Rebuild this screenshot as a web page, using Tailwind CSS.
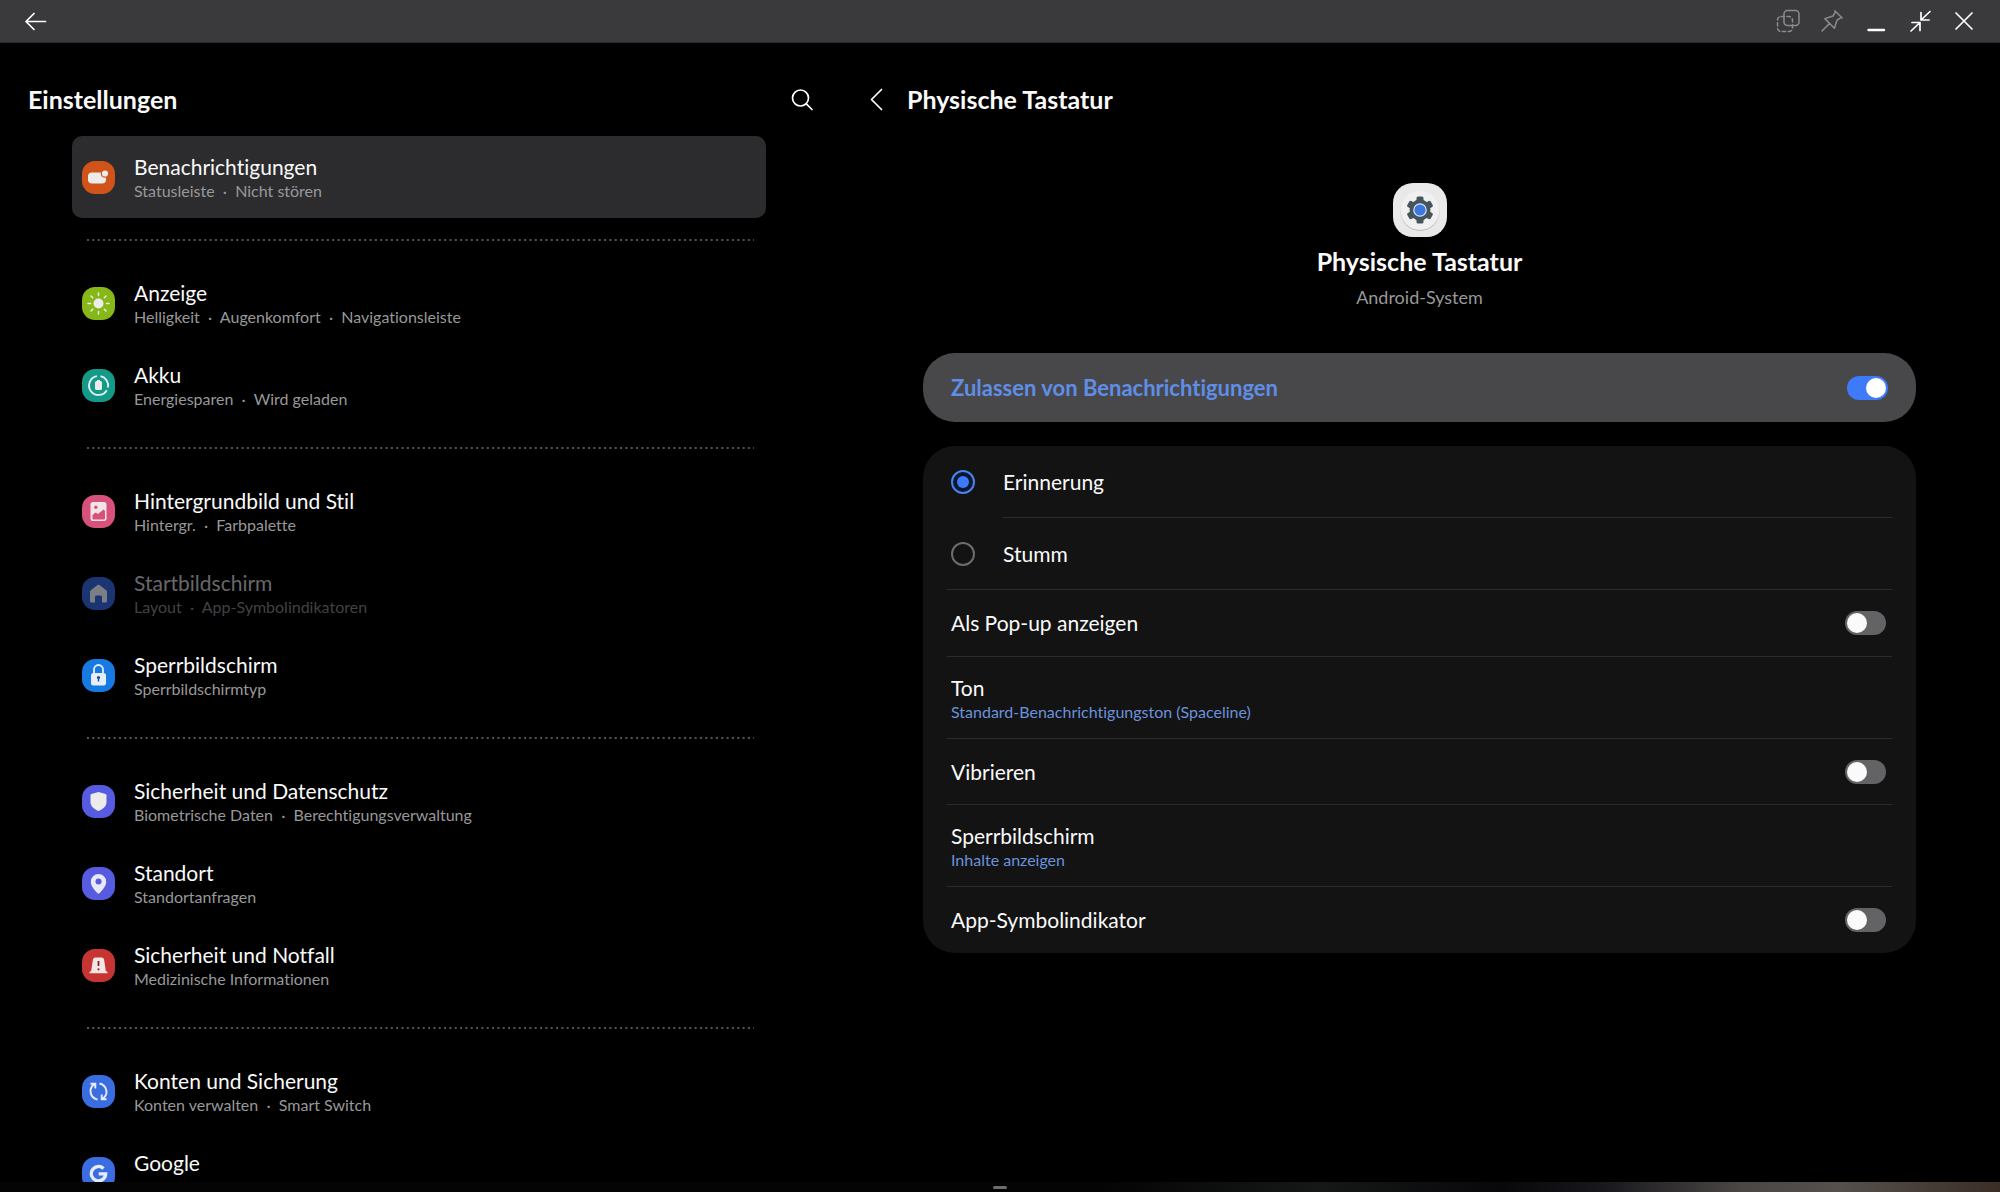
<!DOCTYPE html>
<html lang="de">

<head>
    <meta charset="UTF-8">
    <meta name="viewport" content="width=device-width, initial-scale=1.0">
    <title>Einstellungen</title>
    <!-- Include Tailwind CSS -->
    <script src="https://cdn.jsdelivr.net/npm/@tailwindcss/browser@4"></script>
</head>

<body class="bg-black text-[#fafafa] font-['Lato','Noto_Sans',sans-serif] [font-variant-ligatures:none] h-screen flex flex-col overflow-hidden">

    <!-- Window title bar -->
    <div class="h-[43px] shrink-0 bg-[#3a3a3c] border-b border-[#2a2a2c] flex items-center justify-between pl-6 pr-6">
        <button aria-label="Zurück">
            <svg class="w-6 h-6" viewBox="0 0 24 24" fill="none" stroke="#fff" stroke-width="1.7" stroke-linecap="round" stroke-linejoin="round"><path d="M21.5 12.5H2M10 4.5L2 12.500l8 8" /></svg>
        </button>
        <div class="flex items-center gap-5">
            <button aria-label="Deckkraft">
                <svg class="w-6 h-6" viewBox="0 0 24 24" fill="none" stroke="#8b8b8d" stroke-width="1.5" stroke-linecap="round"><rect x="8" y="1.5" width="15" height="15" rx="3.5" /><rect x="1.5" y="7.5" width="15" height="15" rx="3.5" stroke-dasharray="3.4 2.6" /></svg>
            </button>
            <button aria-label="Anheften">
                <svg class="w-6 h-6" viewBox="0 0 24 24" fill="none" stroke="#8b8b8d" stroke-width="1.5" stroke-linecap="round" stroke-linejoin="round"><path d="M14.8 1.8l7.4 7.2M15.6 2.6L13 7l-8.200 2.600l9.600 9.600L17 11.200L21.400 8.400M9.600 14.400L2 22" /></svg>
            </button>
            <button aria-label="Minimieren">
                <svg class="w-6 h-6" viewBox="0 0 24 24" fill="none" stroke="#fff" stroke-width="2.400" stroke-linecap="round"><path d="M4.500 21h15.500" /></svg>
            </button>
            <button aria-label="Verkleinern">
                <svg class="w-6 h-6" viewBox="0 0 24 24" fill="none" stroke="#fff" stroke-width="1.700" stroke-linecap="round" stroke-linejoin="round"><path d="M22 2.500l-9 8.500M13 3.500V11h8M3 22l9-8.500M12 21.500V13.500H4" /></svg>
            </button>
            <button aria-label="Schließen">
                <svg class="w-6 h-6" viewBox="0 0 24 24" fill="none" stroke="#fff" stroke-width="1.700" stroke-linecap="round"><path d="M4 4l16 16M20 4L4 20" /></svg>
            </button>
        </div>
    </div>

    <div class="flex flex-1 min-h-0">

        <!-- Settings list -->
        <section class="w-[42%] flex flex-col min-h-0">
            <div class="mt-8 mb-[11px] h-[50px] shrink-0 flex items-center justify-between pl-7 pr-[26px]">
                <h1 class="text-[25px] font-bold">Einstellungen</h1>
                <button aria-label="Suchen">
                    <svg class="w-6 h-6" viewBox="0 0 24 24" fill="none" stroke="#fff" stroke-width="1.700" stroke-linecap="round"><circle cx="10.500" cy="10" r="8" /><path d="M16.300 15.800L22 21.500" /></svg>
                </button>
            </div>

            <nav class="flex-1 min-h-0 overflow-hidden pl-[72px] pr-[74px]">
                <a href="#" class="h-[82px] flex items-center gap-[19px] pl-[10px] rounded-[10px] bg-[#2c2c2e]">
                    <svg class="w-[33px] h-[33px]" viewBox="0 0 33 33"><rect width="33" height="33" rx="13" fill="#d0541a" /><rect x="6" y="11.500" width="18" height="11" rx="4" fill="#ececec" /><circle cx="23" cy="12.500" r="4.300" fill="#d0541a" /><circle cx="23" cy="12.500" r="3.100" fill="#ececec" /></svg>
                    <span class="pt-1">
                        <span class="block text-[21px] leading-6">Benachrichtigungen</span>
                        <span class="block text-base leading-6 text-[#98989a] whitespace-pre">Statusleiste  ·  Nicht stören</span>
                    </span>
                </a>

                <svg class="w-full h-[44px] px-[15px] pr-3"><line x1="0" y1="22" x2="100%" y2="22" stroke="#555" stroke-width="2" stroke-dasharray="2 3.330" /></svg>

                <a href="#" class="h-[82px] flex items-center gap-[19px] pl-[10px]">
                    <svg class="w-[33px] h-[33px]" viewBox="0 0 33 33"><rect width="33" height="33" rx="13" fill="#86b817" /><circle cx="16.500" cy="16.500" r="5" fill="#ececec" /><path d="M16.500 6v2.500M16.500 24.500V27M6 16.500h2.500M24.500 16.500H27M9 9l1.700 1.700M22.300 22.300L24 24M24 9l-1.700 1.700M10.700 22.300L9 24" stroke="#ececec" stroke-width="1.500" stroke-linecap="round" /></svg>
                    <span class="pt-1">
                        <span class="block text-[21px] leading-6">Anzeige</span>
                        <span class="block text-base leading-6 text-[#98989a] whitespace-pre">Helligkeit  ·  Augenkomfort  ·  Navigationsleiste</span>
                    </span>
                </a>
                <a href="#" class="h-[82px] flex items-center gap-[19px] pl-[10px]">
                    <svg class="w-[33px] h-[33px]" viewBox="0 0 33 33"><rect width="33" height="33" rx="13" fill="#159a89" /><path d="M18.500 7.200A9.500 9.500 0 0 1 25.900 18.500M24.800 21.200A9.500 9.500 0 1 1 15 7.100" fill="none" stroke="#e4f5f2" stroke-width="1.800" /><path d="M15 11h3v1h.5a1.500 1.500 0 0 1 1.500 1.500v6a1.500 1.500 0 0 1-1.500 1.500h-4a1.500 1.500 0 0 1-1.500-1.500v-6a1.500 1.500 0 0 1 1.500-1.500h.5z" fill="#ececec" /></svg>
                    <span class="pt-1">
                        <span class="block text-[21px] leading-6">Akku</span>
                        <span class="block text-base leading-6 text-[#98989a] whitespace-pre">Energiesparen  ·  Wird geladen</span>
                    </span>
                </a>

                <svg class="w-full h-[44px] px-[15px] pr-3"><line x1="0" y1="22" x2="100%" y2="22" stroke="#555" stroke-width="2" stroke-dasharray="2 3.330" /></svg>

                <a href="#" class="h-[82px] flex items-center gap-[19px] pl-[10px]">
                    <svg class="w-[33px] h-[33px]" viewBox="0 0 33 33"><rect width="33" height="33" rx="13" fill="#d6527a" /><rect x="8.500" y="7" width="16" height="19" rx="2.500" fill="#f3e4ea" /><circle cx="13.800" cy="12.300" r="1.700" fill="#d6527a" /><path d="M10.500 20l3-2.500 2.500 1.500 5.500-4.500 1.500 1.500v7.500a1 1 0 0 1-1 1h-10.500a1 1 0 0 1-1-1z" fill="#d6527a" /></svg>
                    <span class="pt-1">
                        <span class="block text-[21px] leading-6">Hintergrundbild und Stil</span>
                        <span class="block text-base leading-6 text-[#98989a] whitespace-pre">Hintergr.  ·  Farbpalette</span>
                    </span>
                </a>
                <a href="#" aria-disabled="true" class="h-[82px] flex items-center gap-[19px] pl-[10px]">
                    <svg class="w-[33px] h-[33px]" viewBox="0 0 33 33"><rect width="33" height="33" rx="13" fill="#1b3572" /><path d="M15.500 8a1.700 1.700 0 0 1 2 0l7 5.500q.5.500.5 1.200V24a1.500 1.500 0 0 1-1.500 1.500H20V20a1.500 1.500 0 0 0-1.500-1.500h-4A1.500 1.500 0 0 0 13 20v5.500H9.500A1.500 1.500 0 0 1 8 24v-9.300q0-.7.500-1.200z" fill="#7c7e86" /></svg>
                    <span class="pt-1">
                        <span class="block text-[21px] leading-6 text-[#68686a]">Startbildschirm</span>
                        <span class="block text-base leading-6 text-[#424244] whitespace-pre">Layout  ·  App-Symbolindikatoren</span>
                    </span>
                </a>
                <a href="#" class="h-[82px] flex items-center gap-[19px] pl-[10px]">
                    <svg class="w-[33px] h-[33px]" viewBox="0 0 33 33"><rect width="33" height="33" rx="13" fill="#1779e2" /><path d="M12 15v-4.500a4.500 4.500 0 0 1 9 0V15" fill="none" stroke="#e6eef8" stroke-width="1.800" /><rect x="9" y="14" width="15" height="12.500" rx="2.500" fill="#e6eef8" /><circle cx="16.500" cy="18.500" r="1.600" fill="#1a4fa0" /><path d="M16.500 18.500v4" stroke="#1a4fa0" stroke-width="1.400" /></svg>
                    <span class="pt-1">
                        <span class="block text-[21px] leading-6">Sperrbildschirm</span>
                        <span class="block text-base leading-6 text-[#98989a] whitespace-pre">Sperrbildschirmtyp</span>
                    </span>
                </a>

                <svg class="w-full h-[44px] px-[15px] pr-3"><line x1="0" y1="22" x2="100%" y2="22" stroke="#555" stroke-width="2" stroke-dasharray="2 3.330" /></svg>

                <a href="#" class="h-[82px] flex items-center gap-[19px] pl-[10px]">
                    <svg class="w-[33px] h-[33px]" viewBox="0 0 33 33"><rect width="33" height="33" rx="13" fill="#565be0" /><path d="M16.500 7l7 2q1 .4 1 1.500v6.500c0 4-3 7-8 9-5-2-8-5-8-9v-6.500q0-1.100 1-1.500z" fill="#ececec" /></svg>
                    <span class="pt-1">
                        <span class="block text-[21px] leading-6">Sicherheit und Datenschutz</span>
                        <span class="block text-base leading-6 text-[#98989a] whitespace-pre">Biometrische Daten  ·  Berechtigungsverwaltung</span>
                    </span>
                </a>
                <a href="#" class="h-[82px] flex items-center gap-[19px] pl-[10px]">
                    <svg class="w-[33px] h-[33px]" viewBox="0 0 33 33"><rect width="33" height="33" rx="13" fill="#565be0" /><path d="M16.500 7a7.700 7.700 0 0 1 7.700 7.700c0 4.500-4 8.500-6.500 11.300a1.600 1.600 0 0 1-2.400 0c-2.500-2.800-6.500-6.800-6.500-11.300A7.700 7.700 0 0 1 16.500 7z" fill="#e8e9fa" /><circle cx="16.500" cy="14.500" r="3" fill="#565be0" /></svg>
                    <span class="pt-1">
                        <span class="block text-[21px] leading-6">Standort</span>
                        <span class="block text-base leading-6 text-[#98989a] whitespace-pre">Standortanfragen</span>
                    </span>
                </a>
                <a href="#" class="h-[82px] flex items-center gap-[19px] pl-[10px]">
                    <svg class="w-[33px] h-[33px]" viewBox="0 0 33 33"><rect width="33" height="33" rx="13" fill="#c73532" /><path d="M13.500 8.500h6q2.200 0 2.600 2.200L23.800 22l1.700 1v1.200h-18V23l1.700-1 1.700-11.300q.4-2.200 2.600-2.200z" fill="#f3e6e6" /><path d="M16.500 12v5" stroke="#8a2020" stroke-width="1.800" /><circle cx="16.500" cy="20.300" r="1.100" fill="#8a2020" /></svg>
                    <span class="pt-1">
                        <span class="block text-[21px] leading-6">Sicherheit und Notfall</span>
                        <span class="block text-base leading-6 text-[#98989a] whitespace-pre">Medizinische Informationen</span>
                    </span>
                </a>

                <svg class="w-full h-[44px] px-[15px] pr-3"><line x1="0" y1="22" x2="100%" y2="22" stroke="#555" stroke-width="2" stroke-dasharray="2 3.330" /></svg>

                <a href="#" class="h-[82px] flex items-center gap-[19px] pl-[10px]">
                    <svg class="w-[33px] h-[33px]" viewBox="0 0 33 33" fill="none" stroke="#e6ecfa" stroke-width="1.900"><rect width="33" height="33" rx="13" fill="#3a6de0" stroke="none" /><path d="M15.500 24.500C7.500 22.500 6.500 13.500 12 9.500M8.500 8.800h4.800v4.800M17.500 8.500c8 2 9 11 3.500 15M24.500 24.200h-4.800v-4.800" /></svg>
                    <span class="pt-1">
                        <span class="block text-[21px] leading-6">Konten und Sicherung</span>
                        <span class="block text-base leading-6 text-[#98989a] whitespace-pre">Konten verwalten  ·  Smart Switch</span>
                    </span>
                </a>
                <a href="#" class="h-[82px] flex items-center gap-[19px] pl-[10px]">
                    <svg class="w-[33px] h-[33px]" viewBox="0 0 33 33"><rect width="33" height="33" rx="13" fill="#3a6de0" /><path d="M21.500 11.500A7.200 7.200 0 1 0 23.700 16.800H16.700" fill="none" stroke="#e6ecfa" stroke-width="3.300" /></svg>
                    <span class="pt-1">
                        <span class="block text-[21px] leading-6">Google</span>
                        <span class="block text-base leading-6 text-[#98989a] whitespace-pre">Google-Dienste</span>
                    </span>
                </a>
            </nav>
        </section>

        <!-- Notification settings of the selected category -->
        <main class="flex-1">
            <div class="mt-8 mb-3 h-[50px] flex items-center gap-[19px] pl-6">
                <button aria-label="Zurück">
                    <svg class="w-6 h-6" viewBox="0 0 24 24" fill="none" stroke="#fff" stroke-width="1.700" stroke-linecap="round" stroke-linejoin="round"><path d="M17.500 1.500L7.500 11.500l10 10" /></svg>
                </button>
                <h2 class="text-[25px] font-bold">Physische Tastatur</h2>
            </div>

            <div class="pl-[83px] pr-[84px] pt-[46px]">
                <div class="flex flex-col items-center">
                    <svg class="w-[54px] h-[54px]" viewBox="0 0 54 54">
                        <rect width="54" height="54" rx="20" fill="#e9e9e9" />
                        <circle cx="27" cy="28.500" r="19.500" fill="#bdbdbd" />
                        <circle cx="27" cy="27.500" r="19.500" fill="#f0f0f0" />
                        <g fill="#46545c">
                            <circle cx="27" cy="27" r="10.500" />
                            <rect x="23.500" y="13.500" width="7" height="27" rx="1.500" />
                            <rect x="23.500" y="13.500" width="7" height="27" rx="1.500" transform="rotate(60 27 27)" />
                            <rect x="23.500" y="13.500" width="7" height="27" rx="1.500" transform="rotate(120 27 27)" />
                        </g>
                        <circle cx="27" cy="27" r="6.200" fill="#3a78de" stroke="#d8e4f8" stroke-width="1.200" />
                    </svg>
                    <h3 class="mt-2 text-[25px] leading-8 font-bold">Physische Tastatur</h3>
                    <p class="mt-2 text-lg leading-6 text-[#98989a]">Android-System</p>
                </div>

                <label class="mt-11 h-[69px] flex items-center justify-between pl-7 pr-7 rounded-[32px] bg-[#48484a] text-[#5f8ee6] text-[22px] font-bold">
                    Zulassen von Benachrichtigungen
                    <input type="checkbox" checked class="appearance-none w-[41px] h-6 rounded-full bg-[#3d7bfa] flex items-center justify-end px-[2px] before:content-[''] before:w-5 before:h-5 before:rounded-full before:bg-white">
                </label>

                <div class="mt-6 rounded-[32px] bg-[#131313] px-6 text-[21px]">
                    <label class="h-[72px] flex items-center pl-1">
                        <input type="radio" name="mode" checked class="appearance-none w-6 h-6 rounded-full border-2 border-[#4a82ee] bg-[#0a1730] flex items-center justify-center before:content-[''] before:w-3 before:h-3 before:rounded-full before:bg-[#3d7bfa]">
                        <span class="ml-7 h-full flex-1 flex items-center border-b border-[#2c2c2c]">Erinnerung</span>
                    </label>
                    <label class="h-[72px] flex items-center pl-1 border-b border-[#2c2c2c]">
                        <input type="radio" name="mode" class="appearance-none w-6 h-6 rounded-full border-2 border-[#6c6c6c]">
                        <span class="ml-7">Stumm</span>
                    </label>
                    <label class="h-[67px] flex items-center justify-between pl-1 pr-[6px] border-b border-[#2c2c2c]">
                        Als Pop-up anzeigen
                        <input type="checkbox" class="appearance-none w-[41px] h-6 rounded-full bg-[#636366] flex items-center px-[2px] before:content-[''] before:w-5 before:h-5 before:rounded-full before:bg-[#fafafa]">
                    </label>
                    <a href="#" class="h-[82px] flex flex-col justify-center pt-1 pl-1 border-b border-[#2c2c2c]">
                        <span class="leading-6">Ton</span>
                        <span class="text-base leading-6 text-[#6a92dc]">Standard-Benachrichtigungston (Spaceline)</span>
                    </a>
                    <label class="h-[66px] flex items-center justify-between pl-1 pr-[6px] border-b border-[#2c2c2c]">
                        Vibrieren
                        <input type="checkbox" class="appearance-none w-[41px] h-6 rounded-full bg-[#636366] flex items-center px-[2px] before:content-[''] before:w-5 before:h-5 before:rounded-full before:bg-[#fafafa]">
                    </label>
                    <a href="#" class="h-[82px] flex flex-col justify-center pt-1 pl-1 border-b border-[#2c2c2c]">
                        <span class="leading-6">Sperrbildschirm</span>
                        <span class="text-base leading-6 text-[#6a92dc]">Inhalte anzeigen</span>
                    </a>
                    <label class="h-[66px] flex items-center justify-between pl-1 pr-[6px]">
                        App-Symbolindikator
                        <input type="checkbox" class="appearance-none w-[41px] h-6 rounded-full bg-[#636366] flex items-center px-[2px] before:content-[''] before:w-5 before:h-5 before:rounded-full before:bg-[#fafafa]">
                    </label>
                </div>
            </div>
        </main>
    </div>

    <!-- Strip below the window with the resize handle -->
    <div class="h-[10px] shrink-0 flex items-center justify-center bg-[linear-gradient(to_right,#040404_55%,#161717_66%,#08080a_75%,#17171c_80%,#4a4644_87%,#55504c_92%,#3a2d26_100%)]">
        <div class="w-[14px] h-[3px] rounded-xs bg-[#6c6c6c]"></div>
    </div>

</body>

</html>
